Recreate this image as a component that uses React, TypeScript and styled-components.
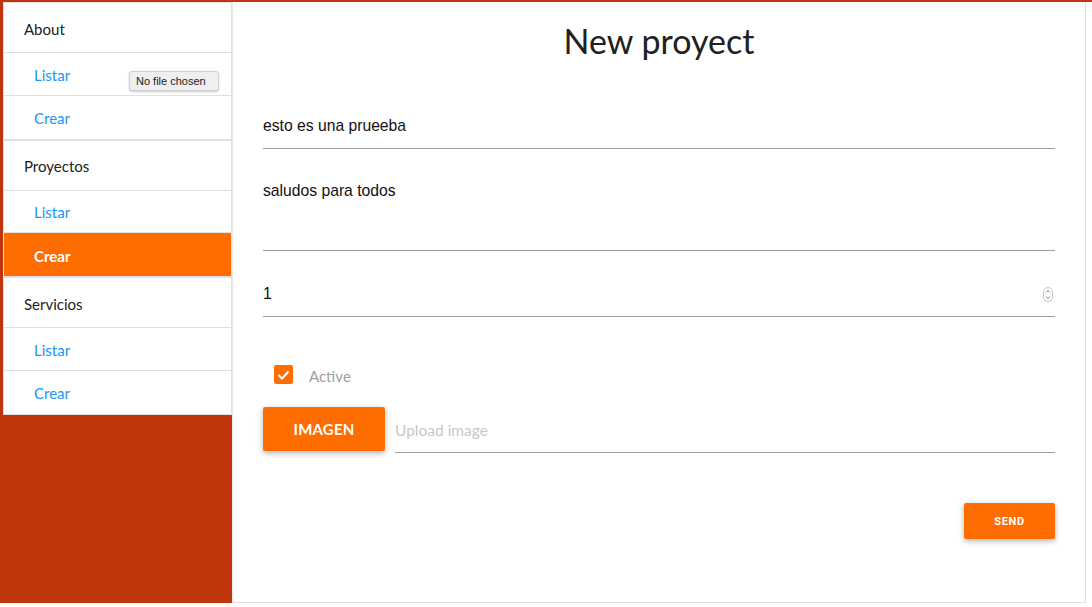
import React from "react";
import styled, { createGlobalStyle } from "styled-components";

const GlobalStyle = createGlobalStyle`
  html, body { margin: 0; padding: 0; background: #ffffff; }
  body { font-family: Lato, "Open Sans", sans-serif; color: #212121; }
  * { box-sizing: border-box; }
`;

const Page = styled.div`
  border-top: 2px solid #bf360c;
  width: 1092px;
`;

const Layout = styled.div`
  display: flex;
  height: 601px;
`;

const Sidebar = styled.aside`
  width: 232px;
  flex: none;
  background: #bf360c;
  padding-left: 3px;
  position: relative;
`;

const Collection = styled.ul`
  list-style: none;
  margin: 0;
  padding: 0;
  background: #fff;
  border: 1px solid #e0e0e0;
`;

const Header = styled.li`
  height: 50px;
  display: flex;
  align-items: center;
  padding-left: 20px;
  padding-top: 2px;
  font-size: 15px;
  color: #212121;
  border-bottom: 1px solid #e0e0e0;
`;

const Item = styled.li<{ $active?: boolean }>`
  height: 42.75px;
  display: flex;
  align-items: center;
  padding-left: 30px;
  padding-top: 2px;
  font-size: 15px;
  color: ${(p) => (p.$active ? "#ffffff" : "#2196f3")};
  background: ${(p) => (p.$active ? "#ff6d00" : "#ffffff")};
  font-weight: ${(p) => (p.$active ? 700 : 400)};
  border-bottom: 1px solid #e0e0e0;
  &:last-child { border-bottom: none; }
`;

const FileChip = styled.div`
  position: absolute;
  left: 129px;
  top: 69px;
  width: 90px;
  height: 20px;
  background: #efefef;
  border: 1px solid #d0d0d0;
  border-radius: 3px;
  box-shadow: 0 1px 2px rgba(0, 0, 0, 0.2);
  font-family: "Liberation Sans", Arial, sans-serif;
  font-size: 11px;
  color: #222;
  display: flex;
  align-items: center;
  padding-left: 6px;
`;

const Main = styled.main`
  width: 854px;
  flex: none;
  border-left: 1px solid #e8e8e8;
  border-right: 1px solid #e0e0e0;
  border-bottom: 1px solid #e0e0e0;
  padding: 0 30px;
`;

const Title = styled.h1`
  margin: 17px 0 0;
  text-align: center;
  font-size: 34px;
  font-weight: 400;
  line-height: 44px;
  color: #212121;
`;

const Form = styled.form`
  display: flex;
  flex-direction: column;
`;

const Field = styled.div<{ $top: number }>`
  position: relative;
  margin-top: ${(p) => p.$top}px;
`;

const TextInput = styled.input`
  display: block;
  width: 100%;
  height: 46px;
  border: none;
  border-bottom: 1px solid #9e9e9e;
  outline: none;
  padding: 0;
  font-family: "Liberation Sans", Arial, sans-serif;
  font-size: 15.7px;
  color: #111;
  background: transparent;
`;

const TextArea = styled.textarea`
  display: block;
  width: 100%;
  height: 82px;
  border: none;
  border-bottom: 1px solid #9e9e9e;
  outline: none;
  resize: none;
  padding: 12px 0 0;
  font-family: "Liberation Sans", Arial, sans-serif;
  font-size: 15.7px;
  line-height: 20px;
  color: #111;
  background: transparent;
`;

const Spinner = styled.svg`
  position: absolute;
  right: 2px;
  top: 16px;
`;

const CheckRow = styled.label`
  display: flex;
  align-items: center;
  gap: 16px;
  margin-top: 47px;
  padding-left: 11px;
  font-size: 15px;
  color: #9e9e9e;
`;

const CheckText = styled.span`
  padding-top: 3px;
`;

const Box = styled.span`
  width: 19px;
  height: 19px;
  border-radius: 2px;
  background: #ff6d00;
  display: flex;
  align-items: center;
  justify-content: center;
`;

const UploadRow = styled.div`
  display: flex;
  align-items: flex-start;
  gap: 10px;
  margin-top: 22px;
`;

const OrangeButton = styled.button<{ $small?: boolean }>`
  flex: none;
  border: none;
  border-radius: 2px;
  background: #ff6d00;
  color: #fff;
  box-shadow: 0 2px 5px rgba(0, 0, 0, 0.22), 0 2px 8px rgba(0, 0, 0, 0.1);
  width: ${(p) => (p.$small ? 91 : 122)}px;
  height: ${(p) => (p.$small ? 36 : 44)}px;
  font-family: ${(p) => (p.$small ? "Roboto, Arial, sans-serif" : "Lato, sans-serif")};
  font-size: ${(p) => (p.$small ? 11 : 15)}px;
  font-weight: 700;
  letter-spacing: ${(p) => (p.$small ? "0.6px" : "0.2px")};
  text-transform: uppercase;
  padding: 0;
`;

const PathInput = styled.input`
  flex: 1;
  height: 46px;
  border: none;
  border-bottom: 1px solid #9e9e9e;
  outline: none;
  padding: 0;
  font-family: Lato, sans-serif;
  font-size: 15.5px;
  background: transparent;
  &::placeholder { color: #c8c8c8; }
`;

const SendRow = styled.div`
  display: flex;
  justify-content: flex-end;
  margin-top: 50px;
`;

export default function App() {
  const sections = [
    { name: "About", active: -1 },
    { name: "Proyectos", active: 1 },
    { name: "Servicios", active: -1 },
  ];
  return (
    <>
      <GlobalStyle />
      <Page>
        <Layout>
          <Sidebar>
            {sections.map((s) => (
              <Collection key={s.name}>
                <Header>{s.name}</Header>
                {["Listar", "Crear"].map((l, i) => (
                  <Item key={l} $active={s.active === i}>
                    {l}
                  </Item>
                ))}
              </Collection>
            ))}
            <FileChip>No file chosen</FileChip>
          </Sidebar>
          <Main>
            <Title>New proyect</Title>
            <Form onSubmit={(e) => e.preventDefault()}>
              <Field $top={40}>
                <TextInput defaultValue="esto es una prueeba" readOnly />
              </Field>
              <Field $top={20}>
                <TextArea defaultValue="saludos para todos" readOnly />
              </Field>
              <Field $top={20}>
                <TextInput defaultValue="1" readOnly />
                <Spinner width="10" height="15" viewBox="0 0 10 15">
                  <rect x="0.5" y="0.5" width="9" height="14" rx="4.5" fill="#fff" stroke="#c4c4c4" />
                  <path d="M3 5.5 L5 3.5 L7 5.5" fill="none" stroke="#777" strokeWidth="1" />
                  <path d="M3 9.5 L5 11.5 L7 9.5" fill="none" stroke="#777" strokeWidth="1" />
                </Spinner>
              </Field>
              <CheckRow>
                <Box>
                  <svg width="13" height="10" viewBox="0 0 13 10">
                    <path d="M1.5 5 L5 8.5 L11.5 1.5" fill="none" stroke="#fff" strokeWidth="2" />
                  </svg>
                </Box>
                <CheckText>Active</CheckText>
              </CheckRow>
              <UploadRow>
                <OrangeButton type="button">Imagen</OrangeButton>
                <PathInput placeholder="Upload image" readOnly />
              </UploadRow>
              <SendRow>
                <OrangeButton type="submit" $small>
                  Send
                </OrangeButton>
              </SendRow>
            </Form>
          </Main>
        </Layout>
      </Page>
    </>
  );
}
